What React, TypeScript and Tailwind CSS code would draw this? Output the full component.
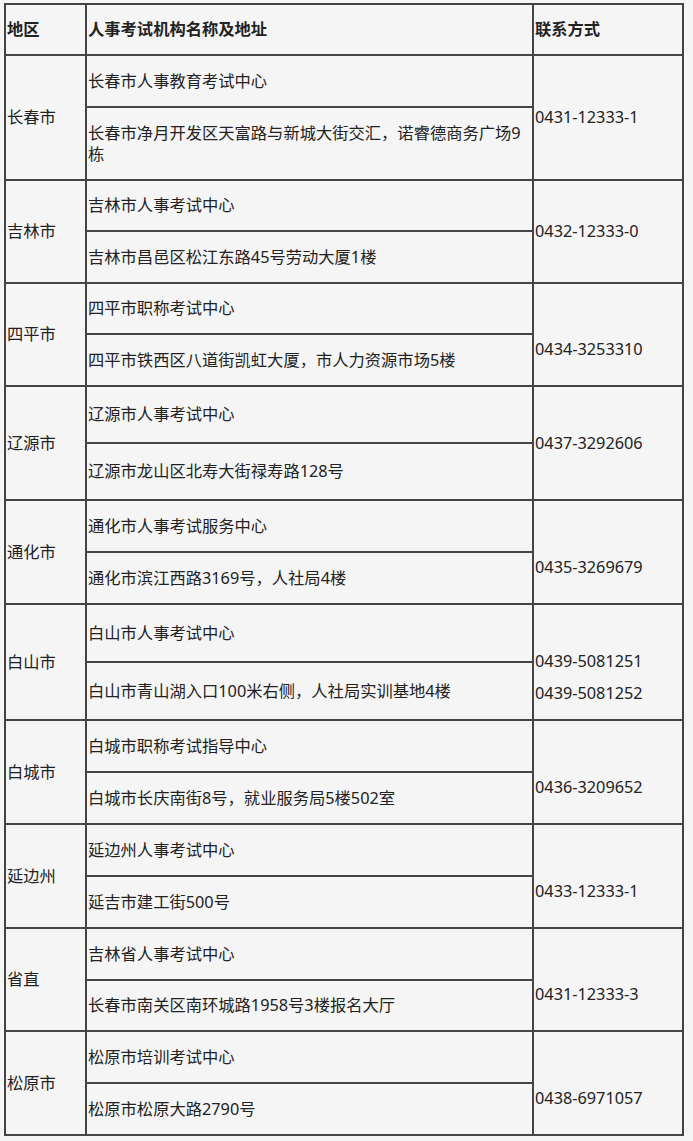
const ROWS = [
  { region: "长春市", name: "长春市人事教育考试中心", addr: ["长春市净月开发区天富路与新城大街交汇，诺睿德商务广场9", "栋"], phones: ["0431-12333-1"], top: "h-[50px]", bottom: "h-[71px]", shift: false },
  { region: "吉林市", name: "吉林市人事考试中心", addr: ["吉林市昌邑区松江东路45号劳动大厦1楼"], phones: ["0432-12333-0"], top: "h-[49px]", bottom: "h-[50px]", shift: false },
  { region: "四平市", name: "四平市职称考试中心", addr: ["四平市铁西区八道街凯虹大厦，市人力资源市场5楼"], phones: ["0434-3253310"], top: "h-[49px]", bottom: "h-[50px]", shift: true },
  { region: "辽源市", name: "辽源市人事考试中心", addr: ["辽源市龙山区北寿大街禄寿路128号"], phones: ["0437-3292606"], top: "h-[55px]", bottom: "h-[55px]", shift: false },
  { region: "通化市", name: "通化市人事考试服务中心", addr: ["通化市滨江西路3169号，人社局4楼"], phones: ["0435-3269679"], top: "h-[50px]", bottom: "h-[50px]", shift: true },
  { region: "白山市", name: "白山市人事考试中心", addr: ["白山市青山湖入口100米右侧，人社局实训基地4楼"], phones: ["0439-5081251", "0439-5081252"], top: "h-[56px]", bottom: "h-[56px]", shift: true },
  { region: "白城市", name: "白城市职称考试指导中心", addr: ["白城市长庆南街8号，就业服务局5楼502室"], phones: ["0436-3209652"], top: "h-[50px]", bottom: "h-[50px]", shift: true },
  { region: "延边州", name: "延边州人事考试中心", addr: ["延吉市建工街500号"], phones: ["0433-12333-1"], top: "h-[50px]", bottom: "h-[50px]", shift: true },
  { region: "省直", name: "吉林省人事考试中心", addr: ["长春市南关区南环城路1958号3楼报名大厅"], phones: ["0431-12333-3"], top: "h-[50px]", bottom: "h-[49px]", shift: true },
  { region: "松原市", name: "松原市培训考试中心", addr: ["松原市松原大路2790号"], phones: ["0438-6971057"], top: "h-[50px]", bottom: "h-[50px]", shift: true },
];

const cell = "bg-[#f5f5f5] flex flex-col justify-center pl-px";

export default function App() {
  return (
    <div
      className="min-h-screen bg-[#f5f5f5] pt-[3px] pl-[4px] text-[16.3px] leading-[21px] text-[#222]"
      style={{ fontFamily: '"Noto Sans", "Noto Sans CJK SC", sans-serif' }}
    >
      <div className="grid w-[680px] grid-cols-[79px_445px_148px] gap-[2px] bg-[#444] p-[2px]">
        {/* header */}
        <div className={`${cell} h-[49px] font-bold`}>地区</div>
        <div className={`${cell} h-[49px] font-bold`}>人事考试机构名称及地址</div>
        <div className={`${cell} h-[49px] font-bold`}>联系方式</div>

        {ROWS.map((r) => [
          <div key={r.region + "-r"} className={`${cell} row-span-2`}>
            {r.region}
          </div>,
          <div key={r.region + "-n"} className={`${cell} ${r.top}`}>
            {r.name}
          </div>,
          <div
            key={r.region + "-p"}
            className={`${cell} row-span-2 ${r.shift ? "pt-[30px]" : ""} ${r.phones.length > 1 ? "leading-[32px]" : ""}`}
          >
            {r.phones.map((p) => (
              <span key={p}>{p}</span>
            ))}
          </div>,
          <div key={r.region + "-a"} className={`${cell} ${r.bottom}`}>
            <span>
              {r.addr.map((line, i) => (
                <span key={i}>
                  {i > 0 && <br />}
                  {line}
                </span>
              ))}
            </span>
          </div>,
        ])}
      </div>
    </div>
  );
}
